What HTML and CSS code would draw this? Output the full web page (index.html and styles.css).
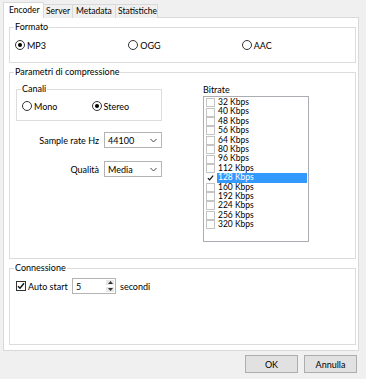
FILE: index.html
```html
<!DOCTYPE html>
<html lang="it">

<head>
  <meta charset="UTF-8" />
  <title>Encoder</title>
  <link rel="stylesheet" href="styles.css">
</head>

<body>
  <div class="dialog">
    <div class="tabs">
      <span class="tab active">Encoder</span>
      <span class="tab t-server">Server</span>
      <span class="tab t-meta">Metadata</span>
      <span class="tab t-stat">Statistiche</span>
    </div>
    <div class="panel">
      <div class="group formato">
        <span class="group-title">Formato</span>
        <div class="radio-row cols-3">
          <label class="radio"><span class="dot on"></span>MP3</label>
          <label class="radio"><span class="dot"></span>OGG</label>
          <label class="radio"><span class="dot"></span>AAC</label>
        </div>
      </div>

      <div class="group params">
        <span class="group-title">Parametri di compressione</span>
        <div class="params-body">
          <div class="params-left">
            <div class="group canali">
              <span class="group-title">Canali</span>
              <div class="radio-row cols-2">
                <label class="radio"><span class="dot"></span>Mono</label>
                <label class="radio"><span class="dot on"></span>Stereo</label>
              </div>
            </div>
            <div class="field rate">
              <span>Sample rate Hz</span>
              <div class="select">44100<svg width="7" height="5" viewBox="0 0 7 5"><path d="M0.5 1l3 3 3-3" fill="none" stroke="#444" stroke-width="1"/></svg></div>
            </div>
            <div class="field quality">
              <span>Qualità</span>
              <div class="select">Media<svg width="7" height="5" viewBox="0 0 7 5"><path d="M0.5 1l3 3 3-3" fill="none" stroke="#444" stroke-width="1"/></svg></div>
            </div>
          </div>
          <div class="params-right">
            <div class="list-label">Bitrate</div>
            <div class="listbox" id="bitrates"></div>
          </div>
        </div>
      </div>

      <div class="group conn">
        <span class="group-title">Connessione</span>
        <div class="conn-row">
          <label class="check"><span class="box"><svg width="8" height="8" viewBox="0 0 8 8"><path d="M1 4.2l2 2 4-5" fill="none" stroke="#111" stroke-width="1.4"/></svg></span>Auto start</label>
          <div class="spin">
            <span>5</span>
            <div class="spin-btns">
              <i><svg width="5" height="3" viewBox="0 0 5 3"><path d="M0 3h5L2.5 0z" fill="#333"/></svg></i>
              <i><svg width="5" height="3" viewBox="0 0 5 3"><path d="M0 0h5L2.5 3z" fill="#333"/></svg></i>
            </div>
          </div>
          <span>secondi</span>
        </div>
      </div>
    </div>
    <div class="buttons">
      <button class="btn">OK</button>
      <button class="btn">Annulla</button>
    </div>
  </div>
  <script>
    const rates = [32, 40, 48, 56, 64, 80, 96, 112, 128, 160, 192, 224, 256, 320];
    const picked = 128;
    let rows = "";
    for (let i = 0; i < rates.length; i++) {
      const on = rates[i] === picked;
      rows += `<div class="item${on ? " sel" : ""}"><span class="cb">${
        on ? '<svg width="8" height="8" viewBox="0 0 8 8"><path d="M1 4.2l2 2 4-5" fill="none" stroke="#111" stroke-width="1.4"/></svg>' : ""
      }</span><span class="txt">${rates[i]} Kbps</span></div>`;
    }
    document.getElementById("bitrates").innerHTML = rows;
  </script>
</body>

</html>
```

FILE: styles.css
```css
html,
body {
  margin: 0;
  padding: 0;
}

body {
  width: 366px;
  height: 379px;
  background-color: #f0f0f0;
  font-family: Lato, "Noto Sans", sans-serif;
  font-size: 9px;
  color: #000;
  overflow: hidden;
}

.dialog {
  padding: 2px 7px 0 3px;
}

/* tabs */
.tabs {
  display: flex;
  align-items: flex-end;
  height: 16px;
  margin-bottom: -1px;
  font-size: 8.5px;
}

.tab {
  box-sizing: border-box;
  height: 14px;
  line-height: 12px;
  border: 1px solid #d9d9d9;
  border-left: none;
  border-bottom: none;
  background-color: #f0f0f0;
  padding-left: 3px;
  white-space: nowrap;
}

.tab.active {
  position: relative;
  height: 16px;
  width: 41px;
  line-height: 14px;
  border-left: 1px solid #d9d9d9;
  background-color: #fff;
  padding-left: 5px;
}

.t-server {
  width: 29px;
  padding-left: 2px;
}

.t-meta {
  width: 43px;
}

.t-stat {
  width: 42px;
  padding-left: 2px;
}

.panel {
  box-sizing: border-box;
  height: 334px;
  background-color: #fff;
  border: 1px solid #d9d9d9;
  padding: 0 2px 0 5px;
}

/* group boxes */
.group {
  border: 1px solid #dcdcdc;
  margin-top: 9px;
}

.group-title {
  display: block;
  width: fit-content;
  margin: -6px 0 0 4px;
  padding: 0 1px;
  line-height: 10px;
  background-color: #fff;
}

.formato {
  padding-bottom: 11px;
}

.formato .radio-row {
  margin-top: 7px;
  padding-left: 5px;
}

.radio-row {
  display: grid;
  align-items: center;
  height: 12px;
}

.cols-3 {
  grid-template-columns: repeat(3, 1fr);
}

.cols-2 {
  grid-template-columns: repeat(2, 1fr);
}

.radio,
.check {
  display: flex;
  align-items: center;
  gap: 2px;
}

.dot {
  box-sizing: border-box;
  width: 10px;
  height: 10px;
  border: 1px solid #333;
  border-radius: 50%;
  display: flex;
  align-items: center;
  justify-content: center;
}

.dot.on::after {
  content: "";
  width: 4px;
  height: 4px;
  border-radius: 50%;
  background-color: #000;
}

.params {
  height: 187px;
  box-sizing: border-box;
}

.params-body {
  display: flex;
  padding: 7px 0 0 6px;
}

.params-left {
  width: 146px;
}

.canali {
  margin-top: 5px;
  padding-bottom: 8px;
}

.canali .radio-row {
  margin-top: 6px;
  padding-left: 5px;
}

.field {
  display: flex;
  justify-content: flex-end;
  align-items: center;
  gap: 5px;
}

.rate {
  margin-top: 11px;
}

.quality {
  margin-top: 13px;
}

.select {
  box-sizing: border-box;
  width: 58px;
  height: 16px;
  border: 1px solid #b4b4b4;
  background-color: #fff;
  display: flex;
  align-items: center;
  justify-content: space-between;
  padding: 0 4px 0 3px;
}

.params-right {
  margin-left: 41px;
}

.list-label {
  margin-top: 1px;
  line-height: 10px;
}

.listbox {
  box-sizing: border-box;
  width: 106px;
  height: 146px;
  margin-top: 1px;
  border: 1px solid #abadb3;
  padding: 1px 1px 0 2px;
  font-size: 8.5px;
}

.item {
  display: flex;
  align-items: center;
  height: 9.4px;
  line-height: 9.4px;
}

.cb {
  box-sizing: border-box;
  width: 9px;
  height: 9px;
  border: 1px solid #c4c4c4;
  display: flex;
  align-items: center;
  justify-content: center;
  margin-right: 2px;
}

.item.sel .cb {
  border-color: transparent;
}

.txt {
  flex: 1;
  padding-left: 1px;
}

.item.sel .txt {
  background-color: #3399ff;
  color: #fff;
}

.conn {
  height: 77px;
  box-sizing: border-box;
}

.conn-row {
  display: flex;
  align-items: center;
  margin-top: 5px;
  padding-left: 6px;
}

.check {
  width: 56px;
}

.box {
  box-sizing: border-box;
  width: 10px;
  height: 10px;
  border: 1px solid #333;
  display: flex;
  align-items: center;
  justify-content: center;
}

.spin {
  box-sizing: border-box;
  width: 44px;
  height: 16px;
  margin-right: 4px;
  border: 1px solid #b4b4b4;
  display: flex;
  align-items: center;
  justify-content: space-between;
  padding-left: 3px;
}

.spin-btns {
  display: flex;
  flex-direction: column;
  height: 100%;
  width: 10px;
}

.spin-btns i {
  flex: 1;
  display: flex;
  align-items: center;
  justify-content: center;
  background-color: #e8e8e8;
  border: 1px solid #fff;
}

/* footer */
.buttons {
  display: flex;
  justify-content: flex-end;
  gap: 6px;
  margin-top: 4px;
  padding-right: 2px;
}

.btn {
  box-sizing: border-box;
  width: 53px;
  height: 18px;
  border: 1px solid #adadad;
  background-color: #e1e1e1;
  font-family: inherit;
  font-size: 9px;
  padding: 0;
}
```
